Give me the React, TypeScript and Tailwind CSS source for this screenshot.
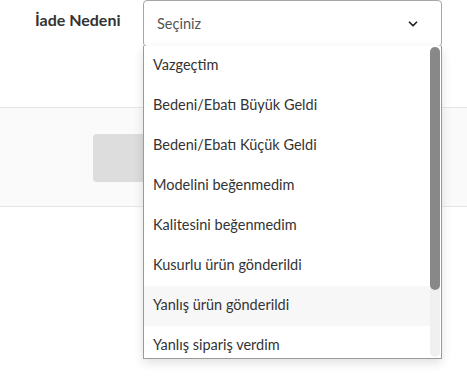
import React from "react";

const reasons = [
  "Vazgeçtim",
  "Bedeni/Ebatı Büyük Geldi",
  "Bedeni/Ebatı Küçük Geldi",
  "Modelini beğenmedim",
  "Kalitesini beğenmedim",
  "Kusurlu ürün gönderildi",
  "Yanlış ürün gönderildi",
  "Yanlış sipariş verdim",
];

export default function App() {
  return (
    <div className="w-[467px] h-[378px] overflow-hidden bg-white text-[#333] font-['Lato','Noto_Sans',sans-serif]">
      {/* Form row */}
      <div className="flex items-start h-[108px] pl-[35px] border-b border-[#e6e6e6]">
        <label className="w-[89px] mt-[9px] text-[16px] leading-[22px] font-bold text-[#333] whitespace-nowrap">İade Nedeni</label>
        <div className="relative ml-[19px] w-[299px]">
          <div className="flex items-center justify-between h-[47px] pl-[13px] pr-[21px] border border-[#a6a6a6] rounded-[4px] bg-white">
            <span className="text-[14.5px] text-[#555]">Seçiniz</span>
            <svg width="14" height="14" viewBox="0 0 24 24" fill="none" stroke="#222" strokeWidth="3" strokeLinecap="round" strokeLinejoin="round">
              <path d="M6 9l6 6 6-6" />
            </svg>
          </div>

          {/* Open dropdown */}
          <div className="absolute left-0 top-[46px] z-10 w-[299px] h-[313px] overflow-hidden bg-white border border-t-0 border-[#9a9a9a] shadow-[0_4px_10px_rgba(0,0,0,0.12)]">
            <ul className="pr-[11px]">
              {reasons.map((r, i) => (
                <li
                  key={r}
                  className={`flex items-center h-10 pl-[9px] pb-[2px] text-[14.5px] text-[#333] ${i === 6 ? "bg-[#f7f7f7]" : ""}`}
                >
                  {r}
                </li>
              ))}
            </ul>
            {/* Scrollbar */}
            <div className="absolute right-[1px] top-[1px] bottom-[1px] w-[10px] rounded-[5px] bg-[#f0f0f0]">
              <div className="h-[243px] w-full rounded-[5px] bg-[#888]" />
            </div>
          </div>
        </div>
      </div>

      {/* Action area */}
      <div className="flex items-start h-[99px] pt-[26px] pl-[93px] bg-[#fafafa] border-b border-[#e6e6e6]">
        <button className="w-[180px] h-[48px] rounded-[4px] bg-[#dddddd]" />
      </div>
    </div>
  );
}
